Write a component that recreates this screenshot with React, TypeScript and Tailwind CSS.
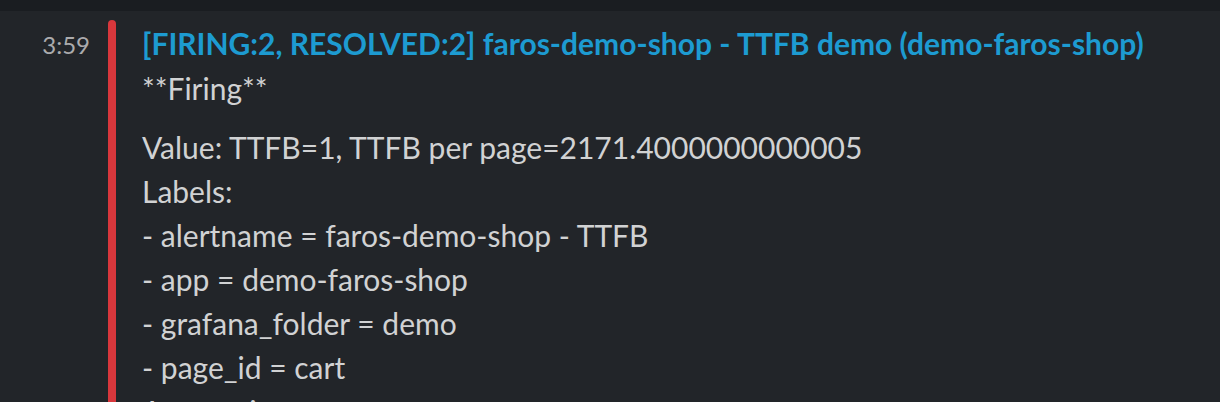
export default function App() {
  const lines = [
    "Value: TTFB=1, TTFB per page=2171.4000000000005",
    "Labels:",
    "- alertname = faros-demo-shop - TTFB",
    "- app = demo-faros-shop",
    "- grafana_folder = demo",
    "- page_id = cart",
    "Annotations:",
  ];

  return (
    <div className="h-[402px] w-[1220px] overflow-hidden bg-[#222529] font-['Lato','Noto_Sans',sans-serif]">
      <div className="h-[11px] bg-[#1a1d21]" />
      <div className="flex">
        <div className="w-[90px] shrink-0 pt-[20px] text-right text-[24px] leading-[28px] text-[#ababad]">3:59</div>
        <div className="ml-[18px] mt-[9px] h-[600px] w-[8px] shrink-0 rounded-t-full bg-[#d8373c]" />
        <div className="ml-[26px] pt-[12px]">
          <div className="text-[30px] font-bold leading-[40px] text-[#1d9bd1]">
            [FIRING:2, RESOLVED:2] faros-demo-shop - TTFB demo (demo-faros-shop)
          </div>
          <div className="mt-[3px] text-[30px] leading-[44px] text-[#d1d2d3]">**Firing**</div>
          <div className="mt-[15px] text-[30px] leading-[44px] text-[#d1d2d3]">
            {lines.map((l) => (
              <div key={l}>{l}</div>
            ))}
          </div>
        </div>
      </div>
    </div>
  );
}
